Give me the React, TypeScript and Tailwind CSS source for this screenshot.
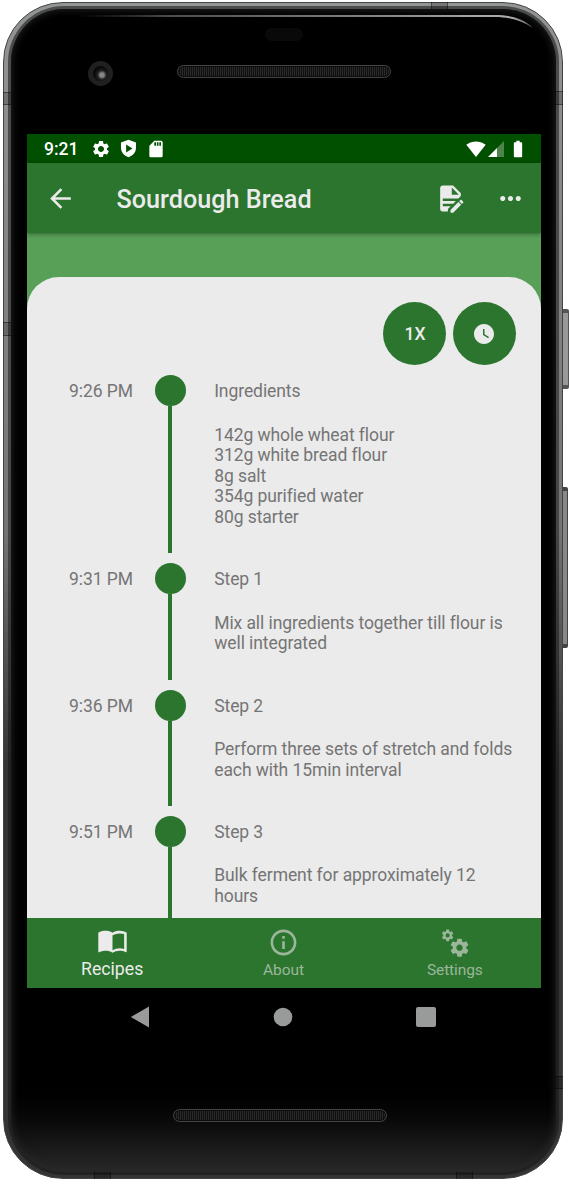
import React from "react";
import {
  MdArrowBack,
  MdBatteryFull,
  MdInfoOutline,
  MdMoreHoriz,
  MdSdCard,
  MdSettings,
  MdSignalWifi4Bar,
  MdWatchLater,
} from "react-icons/md";

type Step = { time: string; title: string; lines: string[]; height: string };

const steps: Step[] = [
  {
    time: "9:26 PM",
    title: "Ingredients",
    lines: [
      "142g whole wheat flour",
      "312g white bread flour",
      "8g salt",
      "354g purified water",
      "80g starter",
    ],
    height: "h-[188px]",
  },
  {
    time: "9:31 PM",
    title: "Step 1",
    lines: ["Mix all ingredients together till flour is", "well integrated"],
    height: "h-[126.5px]",
  },
  {
    time: "9:36 PM",
    title: "Step 2",
    lines: ["Perform three sets of stretch and folds", "each with 15min interval"],
    height: "h-[126px]",
  },
  {
    time: "9:51 PM",
    title: "Step 3",
    lines: ["Bulk ferment for approximately 12", "hours"],
    height: "h-[126px]",
  },
];

function Icon({ d, className }: { d: string; className: string }) {
  return (
    <svg viewBox="0 0 24 24" fill="currentColor" className={className}>
      <path fillRule="evenodd" d={d} />
    </svg>
  );
}

const shieldPath =
  "M12 1 2.500 4.500V11c0 5.600 4 10.200 9.500 12 5.500-1.800 9.500-6.400 9.500-12V4.500L12 1zM9 7l8 5-8 5V7z";
const documentEditPath =
  "M6,2C4.89,2 4,2.9 4,4V20A2,2 0 0,0 6,22H10V20.09L12.09,18H6V16H14.09L16.09,14H6V12H18.09L20,10.09V8L14,2H6M13,3.5L18.5,9H13V3.5M20.15,13C20,13 19.86,13.05 19.75,13.16L18.73,14.18L20.82,16.26L21.84,15.25C22.05,15.03 22.05,14.67 21.84,14.46L20.54,13.16C20.43,13.05 20.29,13 20.15,13M18.14,14.77L12,20.92V23H14.08L20.23,16.85L18.14,14.77Z";
const bookPath =
  "M21 5c-1.11-.35-2.33-.5-3.5-.5-1.95 0-4.05.4-5.5 1.5-1.45-1.1-3.55-1.5-5.5-1.5S2.45 4.9 1 6v14.65c0 .25.25.5.5.5.1 0 .15-.05.25-.05C3.1 20.45 5.05 20 6.5 20c1.95 0 4.05.4 5.5 1.5 1.35-.85 3.8-1.5 5.5-1.5 1.65 0 3.35.3 4.75 1.05.1.05.15.05.25.05.25 0 .5-.25.5-.5V6c-.6-.45-1.25-.75-2-1zm0 13.5c-1.1-.35-2.3-.5-3.5-.5-1.7 0-4.15.65-5.500 1.500V8c1.350-.85 3.800-1.500 5.500-1.500 1.200 0 2.400.15 3.500.5v11.500z";
const cogsPath =
  "M15.9,18.45C17.25,18.45 18.35,17.35 18.35,16C18.35,14.65 17.25,13.55 15.9,13.55C14.54,13.55 13.45,14.65 13.45,16C13.45,17.35 14.54,18.45 15.9,18.45M21.1,16.68L22.58,17.84C22.71,17.95 22.75,18.13 22.66,18.29L21.26,20.71C21.17,20.86 21,20.92 20.83,20.86L19.09,20.16C18.73,20.44 18.33,20.67 17.91,20.85L17.64,22.7C17.62,22.87 17.47,23 17.3,23H14.5C14.32,23 14.18,22.87 14.15,22.7L13.89,20.85C13.46,20.67 13.07,20.44 12.71,20.16L10.96,20.86C10.81,20.92 10.62,20.86 10.54,20.71L9.14,18.29C9.05,18.13 9.09,17.95 9.22,17.84L10.7,16.68L10.65,16L10.7,15.31L9.22,14.16C9.09,14.05 9.05,13.86 9.14,13.71L10.54,11.29C10.62,11.13 10.81,11.07 10.96,11.13L12.71,11.84C13.07,11.56 13.46,11.32 13.89,11.15L14.15,9.29C14.18,9.13 14.32,9 14.5,9H17.3C17.47,9 17.62,9.13 17.64,9.29L17.91,11.15C18.33,11.32 18.73,11.56 19.09,11.84L20.83,11.13C21,11.07 21.17,11.13 21.26,11.29L22.66,13.71C22.75,13.86 22.71,14.05 22.58,14.16L21.1,15.31L21.15,16L21.1,16.68M6.69,8.07C7.56,8.07 8.26,7.37 8.26,6.5C8.26,5.63 7.56,4.92 6.69,4.92A1.58,1.58 0 0,0 5.11,6.5C5.11,7.37 5.82,8.07 6.69,8.07M10.03,6.94L11,7.68C11.07,7.75 11.09,7.87 11.03,7.97L10.13,9.53C10.08,9.63 9.96,9.67 9.86,9.63L8.74,9.18L8,9.62L7.81,10.81C7.79,10.92 7.7,11 7.59,11H5.79C5.67,11 5.58,10.92 5.56,10.81L5.4,9.62L4.64,9.18L3.52,9.63C3.41,9.67 3.3,9.63 3.24,9.53L2.34,7.97C2.28,7.87 2.31,7.75 2.39,7.68L3.34,6.94L3.31,6.5L3.34,6.06L2.39,5.32C2.31,5.25 2.28,5.13 2.34,5.03L3.24,3.47C3.3,3.37 3.41,3.32 3.52,3.37L4.63,3.82L5.4,3.38L5.56,2.19C5.58,2.08 5.67,2 5.79,2H7.59C7.7,2 7.79,2.08 7.81,2.19L8,3.38L8.74,3.82L9.86,3.37C9.96,3.32 10.08,3.37 10.13,3.47L11.03,5.03C11.09,5.13 11.07,5.25 11,5.32L10.03,6.06L10.06,6.5L10.03,6.94Z";

const antennaBands = [
  "top-[92px] left-[3px] h-[13px] w-[8px] border-y",
  "top-[322px] left-[3px] h-[14px] w-[8px] border-y",
  "top-[91px] left-[555px] h-[14px] w-[8px] border-y",
  "top-[1076px] left-[555px] h-[13px] w-[8px] border-y",
  "top-[2px] left-[431px] h-[7px] w-[17px] border-x",
  "top-[1172px] left-[94px] h-[7px] w-[17px] border-x",
  "top-[1172px] left-[456px] h-[7px] w-[17px] border-x",
];

function Speaker() {
  return (
    <div className="h-[13px] w-[214px] rounded-full border border-[#444] bg-[#101010] bg-[repeating-linear-gradient(90deg,#292929_0_1px,#101010_1px_2px)] shadow-[inset_0_0_0_1px_#0b0b0b]" />
  );
}

function StatusBar() {
  return (
    <div className="flex h-[29px] shrink-0 items-center bg-[#005000] pr-[15px] pl-[17.500px] text-white">
      <span className="w-[46.500px] pt-[2px] text-[17.500px] leading-[27px] font-medium">9:21</span>
      <MdSettings className="mr-[8px] size-[20px]" />
      <Icon d={shieldPath} className="mr-[8px] size-[19px]" />
      <MdSdCard className="size-[20px]" />
      <MdSignalWifi4Bar className="ml-auto size-[20px]" />
      <svg viewBox="0 0 16 16" className="ml-[2px] size-[16px]">
        <path d="M16 0v16H9V7z" fill="#fff" fillOpacity=".3" />
        <path d="M9 7v9H0z" fill="#fff" />
      </svg>
      <MdBatteryFull className="ml-[4px] -mr-[2px] size-[20px]" />
    </div>
  );
}

function AppBar() {
  return (
    <header className="relative flex h-[70px] shrink-0 items-center bg-[#2b752e] pr-[15px] pl-[18px] text-[#ebebeb] shadow-[0_1px_4px_rgba(0,0,0,.4)]">
      <MdArrowBack className="mr-[41px] size-[31px]" />
      <h1 className="pt-[4px] text-[25.200px] leading-[30px] font-medium whitespace-nowrap">
        Sourdough Bread
      </h1>
      <Icon d={documentEditPath} className="ml-auto size-[31px]" />
      <MdMoreHoriz className="ml-[29px] size-[31px]" />
    </header>
  );
}

function TimelineRow({ step }: { step: Step }) {
  return (
    <div className={`flex shrink-0 ${step.height}`}>
      <div className="w-[128px] pt-[6px] pl-[42.500px]">{step.time}</div>
      <div className="flex w-[31px] flex-col items-center">
        <div className="size-[31px] shrink-0 rounded-full bg-[#2b752e]" />
        <div className="mb-[10px] w-[4px] flex-1 bg-[#2b752e]" />
      </div>
      <div className="pt-[6px] pl-[28.700px] whitespace-nowrap">
        <div className="mb-[23px]">{step.title}</div>
        {step.lines.map((line) => (
          <div key={line}>{line}</div>
        ))}
      </div>
    </div>
  );
}

function BottomTabs() {
  return (
    <nav className="grid h-[70px] shrink-0 grid-cols-3 bg-[#2b752e] text-[#9bb69a]">
      <div className="flex flex-col items-center pt-[7px] text-[#ebebeb]">
        <Icon d={bookPath} className="size-[31px]" />
        <span className="mt-px text-[17.700px] leading-[24px]">Recipes</span>
      </div>
      <div className="flex flex-col items-center pt-[9px]">
        <MdInfoOutline className="size-[31px]" />
        <span className="text-[15.500px] leading-[24px] tracking-[-0.1px]">About</span>
      </div>
      <div className="flex flex-col items-center pt-[9px]">
        <Icon d={cogsPath} className="size-[31px]" />
        <span className="text-[15.500px] leading-[24px] tracking-[-0.1px]">Settings</span>
      </div>
    </nav>
  );
}

function SystemNav() {
  return (
    <div className="flex h-[58px] items-center justify-between pr-[105px] pl-[103px] text-[#999b9a]">
      <svg viewBox="0 0 20 22" className="h-[22px] w-[20px]" fill="currentColor">
        <path d="M19 .5v21L.8 11z" />
      </svg>
      <svg viewBox="0 0 20 20" className="size-[20px]" fill="currentColor">
        <circle cx="10" cy="10" r="9.300" />
      </svg>
      <div className="size-[20px] rounded-[2px] bg-current" />
    </div>
  );
}

export default function App() {
  return (
    <div className="relative h-[1185px] w-[569px] overflow-hidden bg-white pt-[2px] pl-[3px] font-[Roboto,sans-serif]">
      <div className="absolute top-[309px] left-[562px] h-[80px] w-[7px] rounded-r-[2px] border-y-4 border-r border-[#555] bg-[#999]" />
      <div className="absolute top-[487px] left-[562px] h-[161px] w-[6px] rounded-r-[2px] border-y-4 border-r border-[#444] bg-[#888]" />
      <div className="relative h-[1177px] w-[560px] rounded-[60px] border border-[#444] bg-linear-to-b from-[#929594] via-[#747474] via-45% to-[#343434] to-65% p-[3px] pl-[4px]">
        <div className="h-full rounded-[56px] bg-linear-to-b from-[#4b4d4c] via-[#464646] via-45% to-[#222] to-65% p-[3px]">
          <div className="flex h-full flex-col items-center rounded-[53px] bg-linear-to-b from-black from-91% to-[#292929] shadow-[inset_0_0_8px_#282828]">
            <div className="relative flex h-[125px] w-full shrink-0 justify-center">
              <svg
                viewBox="0 0 460 20"
                className="absolute top-[4px] left-[65px] h-[20px] w-[460px]"
                fill="none"
              >
                <defs>
                  <linearGradient id="glare" x1="0" x2="460" y1="0" y2="0" gradientUnits="userSpaceOnUse">
                    <stop offset="0" stopColor="#000" />
                    <stop offset=".2" stopColor="#777" />
                    <stop offset=".95" stopColor="#aaa" />
                    <stop offset="1" stopColor="#555" />
                  </linearGradient>
                </defs>
                <path d="M2 2.500 419 2C434 2 447 5 457 15 446 8 434 4 419 4L2 3.500z" fill="url(#glare)" />
              </svg>
              <div className="absolute top-[19px] h-[13px] w-[38px] rounded-full bg-[#090909]" />
              <div className="absolute top-[52px] left-[77px] size-[25px] rounded-full border-[5px] border-[#202020] bg-[radial-gradient(circle_at_60%_60%,#888_0_15%,#222_35%,#090909_60%)]" />
              <div className="mt-[56px]">
                <Speaker />
              </div>
            </div>
            <main className="flex h-[854px] w-[514px] shrink-0 flex-col">
              <StatusBar />
              <AppBar />
              <div className="flex min-h-0 flex-1 flex-col bg-[#589f57] pt-[44px]">
                <section className="flex min-h-0 flex-1 flex-col overflow-hidden rounded-t-[32px] bg-[#ebebeb] pt-[25px]">
                  <div className="flex shrink-0 justify-end gap-[7px] pr-[25px] text-[#ebebeb]">
                    <button className="size-[63px] rounded-full bg-[#2b752e] pt-[2px] pl-[2px] text-[17.500px] font-medium">
                      1X
                    </button>
                    <button className="flex size-[63px] items-center justify-center rounded-full bg-[#2b752e]">
                      <MdWatchLater className="size-[24px]" />
                    </button>
                  </div>
                  <div className="mt-[10px] flex flex-col text-[17.500px] leading-[20.500px] tracking-[-0.080px] text-[#757575]">
                    {steps.map((step) => (
                      <TimelineRow key={step.time} step={step} />
                    ))}
                  </div>
                </section>
              </div>
              <BottomTabs />
            </main>
            <div className="w-[514px]">
              <SystemNav />
            </div>
            <div className="mt-[63px] mr-[7px]">
              <Speaker />
            </div>
          </div>
        </div>
      </div>
      {antennaBands.map((place) => (
        <div key={place} className={`absolute border-black/40 bg-black/20 ${place}`} />
      ))}
    </div>
  );
}
